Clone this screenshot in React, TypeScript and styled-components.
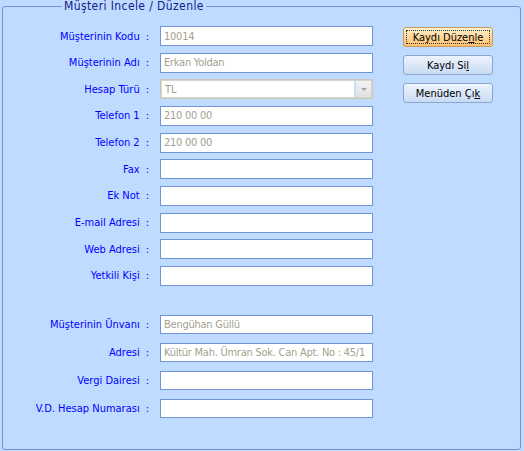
import styled, { createGlobalStyle } from 'styled-components';

const GlobalStyle = createGlobalStyle`
  html, body {
    margin: 0;
    padding: 0;
  }
  body {
    width: 524px;
    height: 451px;
    overflow: hidden;
    background: #bfdbff;
    font-family: 'DejaVu Sans Condensed', 'Liberation Sans', sans-serif;
    font-size: 11px;
  }
`;

const Frame = styled.fieldset`
  box-sizing: border-box;
  margin: 0 0 0 2px;
  padding: 14px 0 0 0;
  width: 519px;
  height: 450px;
  border: 1px solid #6f96d2;
  border-radius: 3px;
  display: flex;
  align-items: flex-start;
  gap: 30px;
`;

const Legend = styled.legend`
  margin-left: 59px;
  padding: 0 2px;
  font-size: 12px;
  line-height: 12px;
  letter-spacing: 0.4px;
  color: #10208a;
`;

const Form = styled.div`
  display: flex;
  flex-direction: column;
`;

const Section = styled.div<{ $row: number; $gap: number; $top?: number }>`
  display: grid;
  grid-template-columns: 146px 213px;
  grid-auto-rows: ${(p) => p.$row}px;
  column-gap: 11px;
  row-gap: ${(p) => p.$gap}px;
  margin-top: ${(p) => p.$top ?? 0}px;
`;

const Label = styled.label`
  display: flex;
  align-items: center;
  justify-content: flex-end;
  color: #0000ff;
  white-space: nowrap;
`;

const Colon = styled.span`
  margin-left: 6px;
`;

const Field = styled.input`
  box-sizing: border-box;
  width: 213px;
  height: 100%;
  margin: 0;
  padding: 0 2px 0 3px;
  border: 1px solid #6f96d2;
  background: #fff;
  color: #a39f8f;
  font: inherit;
  letter-spacing: -0.25px;
  outline: none;
`;

const Combo = styled.div`
  box-sizing: border-box;
  display: flex;
  height: 100%;
  border: 1px solid #c9c6b8;
  box-shadow: inset 0 0 0 1px #d8d6cc;
  padding: 1px;
  gap: 2px;
  background: #c8ddf8;
`;

const ComboText = styled.div`
  flex: 1;
  display: flex;
  align-items: center;
  padding: 0 3px;
  background: #fff;
  color: #a39f8f;
`;

const ComboButton = styled.div`
  width: 15px;
  display: flex;
  align-items: center;
  justify-content: center;
  background: linear-gradient(#f3f3f3, #e0e0e0);
  &::after {
    content: '';
    border-left: 3px solid transparent;
    border-right: 3px solid transparent;
    border-top: 3px solid #a3a3a3;
  }
`;

const Buttons = styled.div`
  display: flex;
  flex-direction: column;
  gap: 8px;
  margin-top: 1px;
`;

const Button = styled.button<{ $default?: boolean }>`
  position: relative;
  box-sizing: border-box;
  width: 90px;
  height: 20px;
  margin: 0;
  padding: 0;
  border: 1px solid ${(p) => (p.$default ? '#c99a55' : '#8aa6d2')};
  border-radius: 3px;
  background: ${(p) =>
    p.$default
      ? 'linear-gradient(#fff3cf, #ffd79a 50%, #ffc16c)'
      : 'linear-gradient(#eef4fd, #dbe7f8 50%, #c8dbf3)'};
  color: #000;
  font: inherit;
  cursor: default;
  &::before {
    content: '';
    display: ${(p) => (p.$default ? 'block' : 'none')};
    position: absolute;
    inset: 2px;
    border: 1px dotted #333;
  }
`;

const topFields = [
  { label: 'Müşterinin Kodu', value: '10014' },
  { label: 'Müşterinin Adı', value: 'Erkan Yoldan' },
  { label: 'Hesap Türü', value: 'TL', combo: true },
  { label: 'Telefon 1', value: '210 00 00' },
  { label: 'Telefon 2', value: '210 00 00' },
  { label: 'Fax', value: '' },
  { label: 'Ek Not', value: '' },
  { label: 'E-mail Adresi', value: '' },
  { label: 'Web Adresi', value: '' },
  { label: 'Yetkili Kişi', value: '' },
];

const bottomFields = [
  { label: 'Müşterinin Ünvanı', value: 'Bengühan Güllü' },
  { label: 'Adresi', value: 'Kültür Mah. Ümran Sok. Can Apt. No : 45/1' },
  { label: 'Vergi Dairesi', value: '' },
  { label: 'V.D. Hesap Numarası', value: '' },
];

type Row = { label: string; value: string; combo?: boolean };

const renderRow = (row: Row) => [
  <Label key={row.label + '-l'}>
    {row.label}
    <Colon>:</Colon>
  </Label>,
  row.combo ? (
    <Combo key={row.label + '-f'}>
      <ComboText>{row.value}</ComboText>
      <ComboButton />
    </Combo>
  ) : (
    <Field key={row.label + '-f'} readOnly defaultValue={row.value} />
  ),
];

export default function App() {
  return (
    <>
      <GlobalStyle />
      <Frame>
        <Legend>Müşteri İncele / Düzenle</Legend>
        <Form>
          <Section $row={20} $gap={6.67}>
            {topFields.map(renderRow)}
          </Section>
          <Section $row={19} $gap={9} $top={29}>
            {bottomFields.map(renderRow)}
          </Section>
        </Form>
        <Buttons>
          <Button $default>
            Kaydı Düze<u>n</u>le
          </Button>
          <Button>
            Kaydı Si<u>l</u>
          </Button>
          <Button>
            Menüden Çı<u>k</u>
          </Button>
        </Buttons>
      </Frame>
    </>
  );
}
